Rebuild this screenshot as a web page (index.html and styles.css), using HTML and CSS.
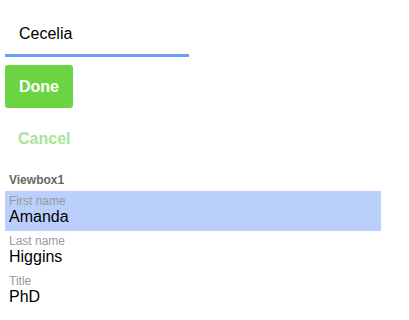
FILE: index.html
```html
<!DOCTYPE html>
<html lang="en">
<head>
  <meta charset="UTF-8" />
  <title>Viewbox editor</title>
  <link rel="stylesheet" href="styles.css">
</head>
<body>

  <!-- NAME INPUT -->
  <div class="field">
    <input type="text" class="field-input" value="Cecelia">
  </div>

  <!-- ACTIONS -->
  <div class="actions">
    <button class="btn btn-done">Done</button>
    <button class="btn btn-cancel">Cancel</button>
  </div>

  <!-- VIEWBOX -->
  <div class="viewbox">
    <div class="viewbox-title">Viewbox1</div>
    <div class="row selected">
      <div class="row-label">First name</div>
      <div class="row-value">Amanda</div>
    </div>
    <div class="row">
      <div class="row-label">Last name</div>
      <div class="row-value">Higgins</div>
    </div>
    <div class="row">
      <div class="row-label">Title</div>
      <div class="row-value">PhD</div>
    </div>
  </div>

</body>
</html>
```

FILE: styles.css
```css
/* Reset & Base */
* { box-sizing: border-box; margin: 0; padding: 0; }
body {
  font-family: "Liberation Sans", Arial, sans-serif;
  background: #fff;
  color: #000;
  padding: 10px 5px 0;
}

/* Name input */
.field {
  width: 184px;
  border-bottom: 3px solid #6a9ef8;
}
.field-input {
  display: block;
  width: 100%;
  height: 44px;
  padding: 3px 14px 0;
  border: none;
  outline: none;
  background: none;
  font-family: inherit;
  font-size: 16px;
  color: #000;
}

/* Buttons */
.actions {
  display: flex;
  flex-direction: column;
  align-items: flex-start;
  gap: 9px;
  margin-top: 8px;
}
.btn {
  height: 43px;
  padding: 0 14px;
  border: none;
  border-radius: 3px;
  font-family: inherit;
  font-size: 16px;
  font-weight: bold;
  cursor: pointer;
}
.btn-done {
  background: #6bd443;
  color: #fff;
}
.btn-cancel {
  background: none;
  color: #a6e595;
  padding-left: 13px;
}

/* Viewbox */
.viewbox {
  margin-top: 13px;
  width: 376px;
}
.viewbox-title {
  padding-left: 4px;
  font-size: 12px;
  line-height: 14px;
  font-weight: bold;
  color: #666;
  margin-bottom: 4px;
}
.row {
  height: 40px;
  padding: 3px 4px 0;
}
.row.selected {
  background: #bbcffc;
}
.row-label {
  font-size: 12px;
  line-height: 14px;
  color: #999;
}
.row-value {
  font-size: 16px;
  line-height: 18px;
  color: #000;
}
```
